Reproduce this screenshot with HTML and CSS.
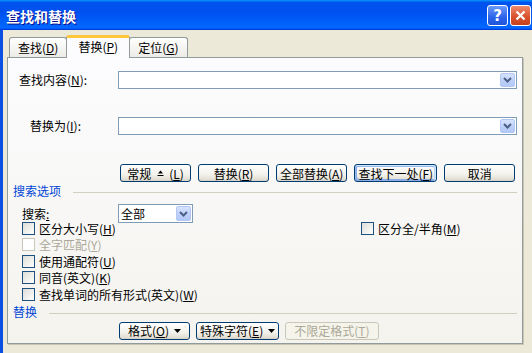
FILE: index.html
```html
<!DOCTYPE html>
<html lang="zh-CN">
<head>
    <meta charset="UTF-8">
    <title>查找和替换</title>
    <link rel="stylesheet" href="styles.css">
</head>
<body>
    <div class="titlebar">
        <span class="title">查找和替换</span>
        <div class="title-btns">
            <div class="tb-btn tb-help">?</div>
            <div class="tb-btn tb-close">
                <svg width="11" height="11" viewBox="0 0 11 11"><path d="M1.5 1.5 L9.5 9.5 M9.5 1.5 L1.5 9.5" stroke="#fff" stroke-width="2.2"/></svg>
            </div>
        </div>
    </div>

    <div class="window-body">
        <div class="tabs">
            <div class="tab">查找(<u>D</u>)</div>
            <div class="tab active">替换(<u>P</u>)</div>
            <div class="tab">定位(<u>G</u>)</div>
        </div>

        <div class="panel">
            <div class="find-grid">
                <div class="field-label">查找内容(<u>N</u>):</div>
                <div class="combo">
                    <div class="combo-btn"><svg width="9" height="6" viewBox="0 0 9 6"><path d="M1 1 L4.5 4.5 L8 1" stroke="#4d6185" stroke-width="2" fill="none"/></svg></div>
                </div>
                <div class="field-label indent">替换为(<u>I</u>):</div>
                <div class="combo">
                    <div class="combo-btn"><svg width="9" height="6" viewBox="0 0 9 6"><path d="M1 1 L4.5 4.5 L8 1" stroke="#4d6185" stroke-width="2" fill="none"/></svg></div>
                </div>
            </div>

            <div class="actions">
                <button class="btn"><span>常规</span><svg class="less" width="7" height="7" viewBox="0 0 7 7"><path d="M3.5 0.5 L6 3.5 L1 3.5 Z" fill="#000"/><rect x="0.5" y="5" width="6" height="1" fill="#000"/></svg><span>(<u>L</u>)</span></button>
                <button class="btn"><span>替换(<u>R</u>)</span></button>
                <button class="btn"><span>全部替换(<u>A</u>)</span></button>
                <button class="btn default"><span>查找下一处(<u>F</u>)</span></button>
                <button class="btn"><span>取消</span></button>
            </div>

            <div class="group">搜索选项</div>

            <div class="options">
                <div class="search-row">
                    <span class="search-label">搜索<u>:</u></span>
                    <div class="select">
                        <span>全部</span>
                        <div class="combo-btn"><svg width="9" height="6" viewBox="0 0 9 6"><path d="M1 1 L4.5 4.5 L8 1" stroke="#4d6185" stroke-width="2" fill="none"/></svg></div>
                    </div>
                </div>
                <div class="checks">
                    <label class="check left"><span class="box"></span><span>区分大小写(<u>H</u>)</span></label>
                    <label class="check right"><span class="box"></span><span>区分全/半角(<u>M</u>)</span></label>
                    <label class="check left disabled"><span class="box"></span><span>全字匹配(<u>Y</u>)</span></label>
                    <label class="check left"><span class="box"></span><span>使用通配符(<u>U</u>)</span></label>
                    <label class="check left"><span class="box"></span><span>同音(英文)(<u>K</u>)</span></label>
                    <label class="check left"><span class="box"></span><span>查找单词的所有形式(英文)(<u>W</u>)</span></label>
                </div>
            </div>

            <div class="group">替换</div>

            <div class="actions bottom">
                <button class="btn"><span>格式(<u>O</u>)</span><svg class="drop" width="7" height="4" viewBox="0 0 7 4"><path d="M0 0 L7 0 L3.5 4 Z" fill="#000"/></svg></button>
                <button class="btn"><span>特殊字符(<u>E</u>)</span><svg class="drop" width="7" height="4" viewBox="0 0 7 4"><path d="M0 0 L7 0 L3.5 4 Z" fill="#000"/></svg></button>
                <button class="btn wide" disabled><span>不限定格式(<u>T</u>)</span></button>
            </div>
        </div>
    </div>
</body>
</html>
```

FILE: styles.css
```css
* {
    margin: 0;
    padding: 0;
    box-sizing: border-box;
}

body {
    font-family: "Noto Sans CJK SC", sans-serif;
    font-size: 12px;
    line-height: 14px;
    color: #000;
    background: #ece9d8;
    height: 353px;
    overflow: hidden;
}

u {
    text-decoration: underline;
}

.titlebar {
    height: 30px;
    display: flex;
    justify-content: space-between;
    align-items: center;
    padding: 1px 1px 0 6px;
    background: linear-gradient(180deg, #0997ff, #0053ee 8%, #0050ee 40%, #06f 88%, #06f 93%, #005bff 95%, #003dd7 96%, #003dd7);
}

.title {
    color: #fff;
    font-weight: bold;
    font-size: 14px;
    line-height: 18px;
    text-shadow: 1px 1px #0f1089;
}

.title-btns {
    display: flex;
    gap: 2px;
}

.tb-btn {
    width: 21px;
    height: 21px;
    border: 1px solid #fff;
    border-radius: 3px;
    display: flex;
    justify-content: center;
    align-items: center;
    color: #fff;
}

.tb-help {
    background: linear-gradient(180deg, #6b9bf9, #2a62ea 60%, #1f55d8);
    font-family: "DejaVu Sans", sans-serif;
    font-weight: bold;
    font-size: 15px;
}

.tb-close {
    background: linear-gradient(180deg, #ee8b6f, #d9532f 55%, #c5401d);
}

.window-body {
    height: 323px;
    border-left: 3px solid #0b50e4;
    padding: 5px 0 0 4px;
}

.tabs {
    display: flex;
    align-items: flex-end;
    height: 22px;
    padding-left: 2px;
}

.tab {
    height: 20px;
    padding: 0 8px;
    margin-right: -1px;
    line-height: 19px;
    border: 1px solid #919b9c;
    border-bottom: none;
    border-radius: 3px 3px 0 0;
    background: linear-gradient(180deg, #fff, #ecebe6);
}

.tab.active {
    position: relative;
    z-index: 1;
    height: 23px;
    margin-bottom: -1px;
    padding: 0 11px;
    line-height: 17px;
    border-top: 3px solid #ffc73c;
    background: #fcfcfe;
}

.panel {
    width: 516px;
    height: 287px;
    border: 1px solid #919b9c;
    background: linear-gradient(180deg, #fcfcfe, #f4f3ee);
    box-shadow: 1px 1px 0 #c9c6b6;
}

.find-grid {
    display: grid;
    grid-template-columns: 110px 1fr;
    align-items: center;
    row-gap: 28px;
    padding: 13px 5px 0 0;
}

.field-label {
    padding-left: 11px;
}

.field-label.indent {
    padding-left: 22px;
}

.combo {
    height: 18px;
    border: 1px solid #7f9db9;
    background: #fff;
    display: flex;
    justify-content: flex-end;
    padding: 1px;
}

.combo-btn {
    width: 15px;
    border: 1px solid #b3c7f5;
    border-radius: 2px;
    background: linear-gradient(180deg, #d6e3fe, #bccffa 60%, #b2c8f7);
    display: flex;
    justify-content: center;
    align-items: center;
}

.actions {
    display: flex;
    gap: 7px;
    padding-left: 112px;
    margin-top: 29px;
}

.btn {
    min-width: 71px;
    height: 18px;
    padding: 0 3px;
    font: inherit;
    line-height: 15px;
    color: #000;
    border: 1px solid #003c74;
    border-radius: 3px;
    background: linear-gradient(180deg, #fff, #f2f1eb 60%, #e3e0d4 88%, #d6d0c5);
    display: inline-flex;
    justify-content: center;
    align-items: center;
    white-space: nowrap;
}

.btn.default {
    box-shadow: inset -1px 1px #cee7ff, inset 1px 2px #98b8ea, inset -2px 2px #bcd4f6, inset 1px -1px #89ade4, inset 2px -2px #89ade4;
}

.btn:disabled {
    color: #aca899;
    border-color: #c9c7ba;
    background: #f5f4ea;
}

.btn .less {
    margin: 0 5px 0 6px;
}

.btn .drop {
    margin-left: 5px;
}

.group {
    display: flex;
    align-items: center;
    height: 14px;
    margin-top: 2px;
    padding: 0 5px;
    color: #0046d5;
}

.group::after {
    content: "";
    flex: 1;
    margin: 3px 0 0 12px;
    border-top: 1px solid #d0d0bf;
}

.options {
    padding-left: 14px;
    margin-top: 6px;
}

.search-row {
    display: flex;
    align-items: center;
    height: 19px;
}

.search-label {
    width: 96px;
}

.select {
    width: 75px;
    height: 19px;
    border: 1px solid #7f9db9;
    background: #fff;
    display: flex;
    justify-content: space-between;
    padding: 1px 1px 1px 2px;
    line-height: 15px;
}

.checks {
    display: grid;
    grid-template-columns: 339px auto;
    grid-auto-rows: 16.5px;
    margin-top: -3px;
    line-height: 13px;
}

.check {
    display: flex;
    align-items: center;
    gap: 4px;
    white-space: nowrap;
}

.check.left {
    grid-column: 1;
}

.check.right {
    grid-column: 2;
}

.box {
    width: 13px;
    height: 13px;
    border: 1px solid #1c5180;
    background: linear-gradient(135deg, #dcdcd7, #fff);
}

.check.disabled {
    color: #aca899;
}

.check.disabled .box {
    border-color: #cac8bb;
    background: #fff;
}

.actions.bottom {
    gap: 6px;
    padding-left: 111px;
    margin-top: 3px;
}

.btn.wide {
    padding: 0 8px;
}
```
